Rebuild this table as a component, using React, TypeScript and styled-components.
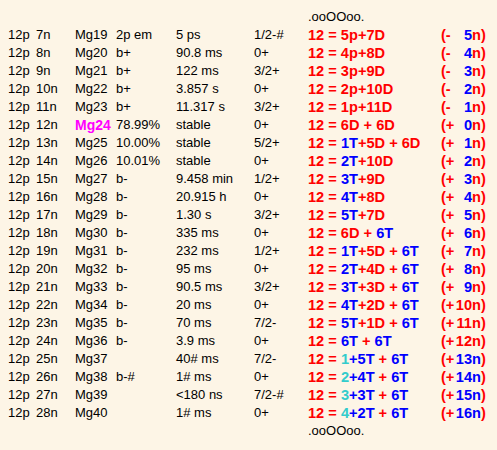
import React from "react";
import styled, { createGlobalStyle } from "styled-components";

const Global = createGlobalStyle`
  html, body { margin: 0; padding: 0; background: #fdf5e6; }
  body { font-family: "Liberation Sans", Arial, sans-serif; color: #000; }
`;

const Page = styled.div`
  width: 497px;
  height: 450px;
  box-sizing: border-box;
  padding: 8px 0 0 8px;
  background: #fdf5e6;
  font-size: 13px;
  line-height: 18px;
`;

const Grid = styled.div`
  display: grid;
  grid-template-columns: 28px 39px 41px 60px 78px 54px 133px 56px;
  grid-auto-rows: 18px;
  align-items: center;
  white-space: nowrap;
`;

const Deco = styled.div`
  grid-column: 7 / 9;
  font-size: 13px;
`;

const Spacer = styled.div`
  grid-column: 1 / 7;
`;

const Cell = styled.div``;

const Name = styled.div<{ $hl?: boolean }>`
  ${(p) =>
    p.$hl
      ? `color: #ff00ff; font-weight: bold; font-size: 14px;`
      : ``}
`;

const Formula = styled.div`
  font-weight: bold;
  font-size: 14.6px;
`;

const Part = styled.span<{ $c: string }>`
  color: ${(p) => p.$c};
  white-space: pre;
`;

const Shift = styled.div`
  font-weight: bold;
  font-size: 14.6px;
  display: flex;
  align-items: baseline;
  color: #ff0000;
`;

const Sign = styled.span`
  display: inline-block;
  width: 14px;
`;

const Num = styled.span<{ $c: string }>`
  display: inline-block;
  width: 17px;
  text-align: right;
  color: ${(p) => p.$c};
`;

const Suffix = styled.span<{ $c: string }>`
  color: ${(p) => p.$c};
`;

const R = "#ff0000";
const B = "#0000ff";
const C = "#33cccc";

type Seg = [string, string];
type Row = {
  n: number;
  name: string;
  decay: string;
  life: string;
  spin: string;
  f: Seg[];
  sign: string;
  k: number;
  mode: "mix" | "red" | "blue";
  hl?: boolean;
};

const rows: Row[] = [
  { n: 7, name: "Mg19", decay: "2p em", life: "5 ps", spin: "1/2-#", f: [[R, "12 = 5p+7D"]], sign: "(-", k: 5, mode: "mix" },
  { n: 8, name: "Mg20", decay: "b+", life: "90.8 ms", spin: "0+", f: [[R, "12 = 4p+8D"]], sign: "(-", k: 4, mode: "mix" },
  { n: 9, name: "Mg21", decay: "b+", life: "122 ms", spin: "3/2+", f: [[R, "12 = 3p+9D"]], sign: "(-", k: 3, mode: "mix" },
  { n: 10, name: "Mg22", decay: "b+", life: "3.857 s", spin: "0+", f: [[R, "12 = 2p+10D"]], sign: "(-", k: 2, mode: "mix" },
  { n: 11, name: "Mg23", decay: "b+", life: "11.317 s", spin: "3/2+", f: [[R, "12 = 1p+11D"]], sign: "(-", k: 1, mode: "mix" },
  { n: 12, name: "Mg24", decay: "78.99%", life: "stable", spin: "0+", f: [[R, "12 = 6D + 6D"]], sign: "(+", k: 0, mode: "mix", hl: true },
  { n: 13, name: "Mg25", decay: "10.00%", life: "stable", spin: "5/2+", f: [[R, "12 = "], [B, "1T"], [R, "+5D + 6D"]], sign: "(+", k: 1, mode: "mix" },
  { n: 14, name: "Mg26", decay: "10.01%", life: "stable", spin: "0+", f: [[R, "12 = "], [B, "2T"], [R, "+10D"]], sign: "(+", k: 2, mode: "mix" },
  { n: 15, name: "Mg27", decay: "b-", life: "9.458 min", spin: "1/2+", f: [[R, "12 = "], [B, "3T"], [R, "+9D"]], sign: "(+", k: 3, mode: "mix" },
  { n: 16, name: "Mg28", decay: "b-", life: "20.915 h", spin: "0+", f: [[R, "12 = "], [B, "4T"], [R, "+8D"]], sign: "(+", k: 4, mode: "mix" },
  { n: 17, name: "Mg29", decay: "b-", life: "1.30 s", spin: "3/2+", f: [[R, "12 = "], [B, "5T"], [R, "+7D"]], sign: "(+", k: 5, mode: "mix" },
  { n: 18, name: "Mg30", decay: "b-", life: "335 ms", spin: "0+", f: [[R, "12 = 6D + "], [B, "6T"]], sign: "(+", k: 6, mode: "mix" },
  { n: 19, name: "Mg31", decay: "b-", life: "232 ms", spin: "1/2+", f: [[R, "12 = "], [B, "1T"], [R, "+5D + "], [B, "6T"]], sign: "(+", k: 7, mode: "mix" },
  { n: 20, name: "Mg32", decay: "b-", life: "95 ms", spin: "0+", f: [[R, "12 = "], [B, "2T"], [R, "+4D + "], [B, "6T"]], sign: "(+", k: 8, mode: "mix" },
  { n: 21, name: "Mg33", decay: "b-", life: "90.5 ms", spin: "3/2+", f: [[R, "12 = "], [B, "3T"], [R, "+3D + "], [B, "6T"]], sign: "(+", k: 9, mode: "mix" },
  { n: 22, name: "Mg34", decay: "b-", life: "20 ms", spin: "0+", f: [[R, "12 = "], [B, "4T"], [R, "+2D + "], [B, "6T"]], sign: "(+", k: 10, mode: "red" },
  { n: 23, name: "Mg35", decay: "b-", life: "70 ms", spin: "7/2-", f: [[R, "12 = "], [B, "5T"], [R, "+1D + "], [B, "6T"]], sign: "(+", k: 11, mode: "red" },
  { n: 24, name: "Mg36", decay: "b-", life: "3.9 ms", spin: "0+", f: [[R, "12 = "], [B, "6T"], [R, " + "], [B, "6T"]], sign: "(+", k: 12, mode: "red" },
  { n: 25, name: "Mg37", decay: "", life: "40# ms", spin: "7/2-", f: [[R, "12 = "], [C, "1"], [B, "+5T"], [R, " + "], [B, "6T"]], sign: "(+", k: 13, mode: "blue" },
  { n: 26, name: "Mg38", decay: "b-#", life: "1# ms", spin: "0+", f: [[R, "12 = "], [C, "2"], [B, "+4T"], [R, " + "], [B, "6T"]], sign: "(+", k: 14, mode: "blue" },
  { n: 27, name: "Mg39", decay: "", life: "<180 ns", spin: "7/2-#", f: [[R, "12 = "], [C, "3"], [B, "+3T"], [R, " + "], [B, "6T"]], sign: "(+", k: 15, mode: "blue" },
  { n: 28, name: "Mg40", decay: "", life: "1# ms", spin: "0+", f: [[R, "12 = "], [C, "4"], [B, "+2T"], [R, " + "], [B, "6T"]], sign: "(+", k: 16, mode: "blue" },
];

export default function App() {
  return (
    <Page>
      <Global />
      <Grid>
        <Spacer />
        <Deco>.ooOOoo.</Deco>
        {rows.map((r) => {
          const numC = r.mode === "red" ? R : B;
          const sufC = r.mode === "blue" ? B : R;
          return (
            <React.Fragment key={r.n}>
              <Cell>12p</Cell>
              <Cell>{r.n}n</Cell>
              <Name $hl={r.hl}>{r.name}</Name>
              <Cell>{r.decay}</Cell>
              <Cell>{r.life}</Cell>
              <Cell>{r.spin}</Cell>
              <Formula>
                {r.f.map((s, i) => (
                  <Part key={i} $c={s[0]}>
                    {s[1]}
                  </Part>
                ))}
              </Formula>
              <Shift>
                <Sign>{r.sign}</Sign>
                <Num $c={numC}>{r.k}</Num>
                <Suffix $c={sufC}>n</Suffix>
                <Suffix $c={R}>)</Suffix>
              </Shift>
            </React.Fragment>
          );
        })}
        <Spacer />
        <Deco>.ooOOoo.</Deco>
      </Grid>
    </Page>
  );
}
